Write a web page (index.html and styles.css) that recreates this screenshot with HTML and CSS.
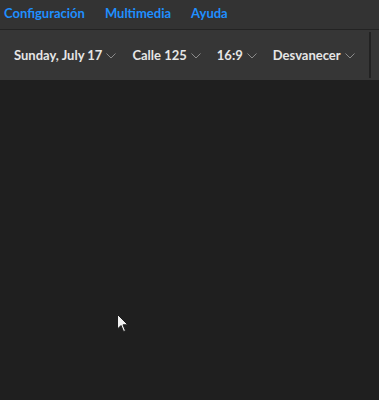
FILE: index.html
```html
<!DOCTYPE html>
<html>
<head>
<meta charset="utf-8">
<link rel="stylesheet" href="styles.css">
</head>
<body>
<div class="app">
  <nav class="menubar">
    <span class="menu">Configuración</span>
    <span class="menu">Multimedia</span>
    <span class="menu">Ayuda</span>
  </nav>
  <div class="toolbar">
    <div class="items">
      <div class="drop">Sunday, July 17<svg class="chev" viewBox="0 0 10 6"><path d="M0.5 0.5 L5 5 L9.5 0.5" /></svg></div>
      <div class="drop">Calle 125<svg class="chev" viewBox="0 0 10 6"><path d="M0.5 0.5 L5 5 L9.5 0.5" /></svg></div>
      <div class="drop">16:9<svg class="chev" viewBox="0 0 10 6"><path d="M0.5 0.5 L5 5 L9.5 0.5" /></svg></div>
      <div class="drop">Desvanecer<svg class="chev" viewBox="0 0 10 6"><path d="M0.5 0.5 L5 5 L9.5 0.5" /></svg></div>
    </div>
    <div class="divider"></div>
  </div>
  <main class="stage">
    <svg class="cursor" viewBox="0 0 12 19" width="12" height="19"><path d="M0.5 0.5 L0.5 15 L4 11.5 L6.5 17.5 L8.5 16.7 L6 10.8 L10.8 10.8 Z" fill="#f2f2f2" stroke="#1f1f1f" stroke-width="1"/></svg>
  </main>
</div>
</body>
</html>
```
FILE: styles.css
```css
* { box-sizing: border-box; }
html, body { margin: 0; padding: 0; }
body {
  background: #1f1f1f;
  font-family: "Source Sans Pro", Lato, "Noto Sans", sans-serif;
  width: 379px;
  height: 400px;
  overflow: hidden;
}
.app { display: flex; flex-direction: column; height: 400px; }
.menubar {
  height: 30px;
  background: #333333;
  border-bottom: 1px solid #232323;
  display: flex;
  align-items: center;
  gap: 20px;
  padding: 0 0 0 4px;
}
.menu {
  color: #1f8fff;
  font-size: 13px;
  font-weight: 700;
  line-height: 1;
  margin-top: -3px;
  white-space: nowrap;
}
.toolbar {
  height: 50px;
  background: #363636;
  display: flex;
  align-items: stretch;
}
.items {
  flex: 1;
  display: flex;
  align-items: center;
  gap: 16px;
  padding-left: 14px;
  overflow: hidden;
}
.drop {
  display: flex;
  align-items: center;
  gap: 4px;
  color: #e6e6e6;
  font-size: 13px;
  font-weight: 700;
  white-space: nowrap;
  flex-shrink: 0;
}
.chev {
  width: 10px;
  height: 6px;
  fill: none;
  stroke: #8a8a8a;
  stroke-width: 1;
  margin-top: 2px;
}
.divider {
  width: 2px;
  background: #222222;
  margin: 2px 8px 2px 0;
}
.stage {
  flex: 1;
  background: #1f1f1f;
  position: relative;
}
.cursor {
  position: absolute;
  left: 117px;
  top: 234px;
}
```
